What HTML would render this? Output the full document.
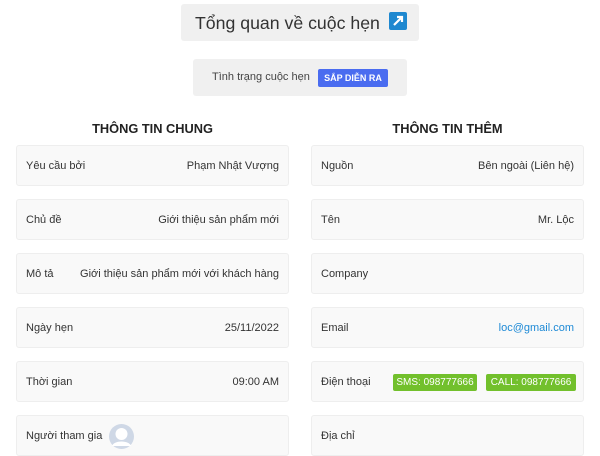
<!DOCTYPE html><html><head><meta charset="utf-8"><style>
body{margin:0;width:600px;height:456px;overflow:hidden;background:#fff;font-family:"Liberation Sans",sans-serif;color:#333;position:relative;white-space:nowrap}
.abs{position:absolute}
.title{left:181px;top:4px;width:238px;height:37px;background:#f0f0f0;border-radius:3px;font-size:17.7px;color:#333;box-sizing:border-box;padding:9px 0 0 14px}
.icon{left:389px;top:12px;width:18px;height:18px;background:#1e88d0;border-radius:2px}
.status{left:193px;top:59px;width:214px;height:37px;background:#f0f0f0;border-radius:3px;font-size:11px;color:#444}
.badge{left:318px;top:69px;width:70px;height:18px;background:#4a6cf0;border-radius:2px;color:#fff;font-size:9px;font-weight:bold;text-align:center;line-height:18px}
.h{font-size:12.8px;font-weight:bold;color:#222;width:273px;text-align:center;top:121px}
.card{width:273px;height:41px;background:#f9f9f9;border:1px solid #eee;border-radius:3px;box-sizing:border-box;font-size:11px;color:#333}
.card .l{position:absolute;left:9px;top:14px}
.card .r{position:absolute;right:9px;top:14px}
.g{position:absolute;top:12px;height:17px;background:#72c02c;color:#fff;font-size:10px;line-height:17px;border-radius:2px;text-align:center}
</style></head><body>
<div class="abs title">Tổng quan về cuộc hẹn</div>
<div class="abs icon"><svg width="18" height="18" viewBox="0 0 18 18"><path d="M5 13L12 6M8 5h5v5" stroke="#fff" stroke-width="2.2" fill="none"/></svg></div>
<div class="abs status"><span class="abs" style="left:19px;top:12px">Tình trạng cuộc hẹn</span></div>
<div class="abs badge">SẮP DIỄN RA</div>
<div class="abs h" style="left:16px">THÔNG TIN CHUNG</div>
<div class="abs h" style="left:311px">THÔNG TIN THÊM</div>

<div class="abs card" style="left:16px;top:145px"><span class="l">Yêu cầu bởi</span><span class="r">Phạm Nhật Vượng</span></div>
<div class="abs card" style="left:16px;top:199px"><span class="l">Chủ đề</span><span class="r">Giới thiệu sản phẩm mới</span></div>
<div class="abs card" style="left:16px;top:253px"><span class="l">Mô tả</span><span class="r">Giới thiệu sản phẩm mới với khách hàng</span></div>
<div class="abs card" style="left:16px;top:307px"><span class="l">Ngày hẹn</span><span class="r">25/11/2022</span></div>
<div class="abs card" style="left:16px;top:361px"><span class="l">Thời gian</span><span class="r">09:00 AM</span></div>
<div class="abs card" style="left:16px;top:415px"><span class="l">Người tham gia</span>
<svg style="position:absolute;left:92px;top:8px" width="25" height="25" viewBox="0 0 25 25"><circle cx="12.5" cy="12.5" r="12.5" fill="#cfd8e6"/><circle cx="12.5" cy="10" r="6" fill="#fff"/><path d="M3 22c2-6 17-6 19 0z" fill="#fff"/></svg></div>

<div class="abs card" style="left:311px;top:145px"><span class="l">Nguồn</span><span class="r">Bên ngoài (Liên hệ)</span></div>
<div class="abs card" style="left:311px;top:199px"><span class="l">Tên</span><span class="r">Mr. Lộc</span></div>
<div class="abs card" style="left:311px;top:253px"><span class="l">Company</span></div>
<div class="abs card" style="left:311px;top:307px"><span class="l">Email</span><span class="r" style="color:#1e8ad6">loc@gmail.com</span></div>
<div class="abs card" style="left:311px;top:361px"><span class="l">Điện thoại</span>
<span class="g" style="left:81px;width:84px">SMS: 098777666</span><span class="g" style="left:174px;width:90px">CALL: 098777666</span></div>
<div class="abs card" style="left:311px;top:415px"><span class="l">Địa chỉ</span></div>
</body></html>
